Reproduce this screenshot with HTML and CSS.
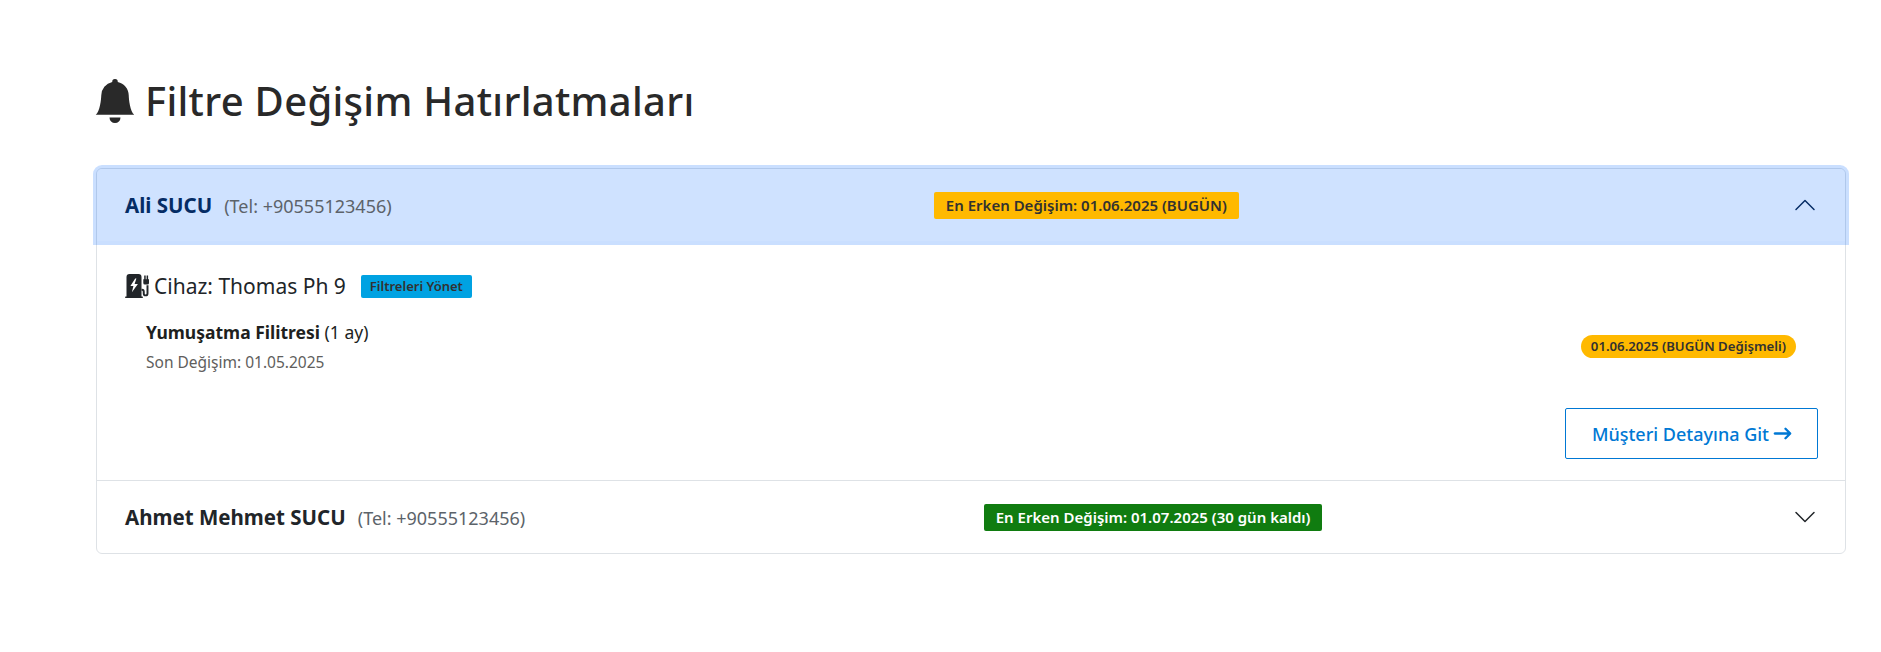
FILE: index.html
```html
<!DOCTYPE html>
<html lang="tr">
	<head>
		<meta charset="UTF-8">
		<title>Filtre Değişim Hatırlatmaları</title>
		<link rel="stylesheet" href="styles.css">
	</head>
	<body>
		<div class="page">
			<h1 class="title">
				<svg class="title-icon" viewBox="0 0 16 16"><path d="M8 16a2 2 0 0 0 2-2H6a2 2 0 0 0 2 2zm.995-14.901a1 1 0 1 0-1.99 0A5.002 5.002 0 0 0 3 6c0 1.098-.5 6-2 7h14c-1.5-1-2-5.902-2-7 0-2.42-1.72-4.44-4.005-4.901z"/></svg>
				Filtre Değişim Hatırlatmaları
			</h1>

			<div class="accordion">
				<div class="item">
					<div class="head head-open">
						<div class="who"><span class="name">Ali SUCU</span><span class="tel">(Tel: +90555123456)</span></div>
						<span class="badge badge-yellow">En Erken Değişim: 01.06.2025 (BUGÜN)</span>
						<div class="chev-box">
							<svg class="chev" viewBox="0 0 16 16"><path d="M1.646 11.354a.5.5 0 0 0 .708 0L8 5.707l5.646 5.647a.5.5 0 0 0 .708-.708l-6-6a.5.5 0 0 0-.708 0l-6 6a.5.5 0 0 0 0 .708z"/></svg>
						</div>
					</div>
					<div class="body">
						<div class="device">
							<svg class="device-icon" viewBox="0 0 16 16"><path fill-rule="evenodd" d="M1 2a2 2 0 0 1 2-2h6a2 2 0 0 1 2 2v13h.5a.5.5 0 0 1 0 1H.5a.5.5 0 0 1 0-1H1V2zm5.800 1L3.600 8h2l-1 4.200L8.600 6.600H6.400L7.600 3H6.800z"/><path d="M11 10.500h.4c.9 0 1.100.6 1.100 1.300v1.200a1.250 1.250 0 0 0 2.500 0V7.500" fill="none" stroke="currentColor" stroke-width="1.300"/><path d="M12.800 1h1v2.500h.6V1h1v2.500h.6v2.500a1 1 0 0 1-1 1h-1.800a1 1 0 0 1-1-1V3.500h.6z"/></svg>
							<span class="device-name">Cihaz: Thomas Ph 9</span>
							<span class="badge badge-blue">Filtreleri Yönet</span>
						</div>
						<div class="filter">
							<div>
								<div class="filter-name"><b>Yumuşatma Filitresi</b> (1 ay)</div>
								<div class="filter-last">Son Değişim: 01.05.2025</div>
							</div>
							<span class="pill">01.06.2025 (BUGÜN Değişmeli)</span>
						</div>
						<div class="actions">
							<a class="btn" href="#">Müşteri Detayına Git
								<svg class="arrow" viewBox="0 0 16 16"><path d="M1 8a.5.5 0 0 1 .5-.5h11.793l-3.147-3.146a.5.5 0 0 1 .708-.708l4 4a.5.5 0 0 1 0 .708l-4 4a.5.5 0 0 1-.708-.708L13.293 8.500H1.500A.5.5 0 0 1 1 8z"/></svg>
							</a>
						</div>
					</div>
				</div>
				<div class="item">
					<div class="head">
						<div class="who"><span class="name">Ahmet Mehmet SUCU</span><span class="tel">(Tel: +90555123456)</span></div>
						<span class="badge badge-green">En Erken Değişim: 01.07.2025 (30 gün kaldı)</span>
						<div class="chev-box">
							<svg class="chev" viewBox="0 0 16 16"><path d="M1.646 4.646a.5.5 0 0 1 .708 0L8 10.293l5.646-5.647a.5.5 0 0 1 .708.708l-6 6a.5.5 0 0 1-.708 0l-6-6a.5.5 0 0 1 0-.708z"/></svg>
						</div>
					</div>
				</div>
			</div>
		</div>
	</body>
</html>
```

FILE: styles.css
```css
body {
	margin: 0;
	padding: 0;
	background: #fff;
	color: #212529;
	font-family: "Noto Sans", "Open Sans", sans-serif;
	font-size: 16px;
	line-height: 24px;
}

.page {
	padding: 71px 35px 0 96px;
}

.title {
	display: flex;
	align-items: center;
	gap: 8px;
	margin: 0 0 37px -3px;
	font-size: 40px;
	font-weight: 500;
	line-height: 60px;
	letter-spacing: 0.3px;
	color: #292929;
}

.title-icon {
	width: 44px;
	height: 44px;
	fill: currentColor;
}

.accordion {
	border: 1px solid #dee2e6;
	border-radius: 6px;
	background: #fff;
}

.item + .item {
	border-top: 1px solid #dee2e6;
}

.head {
	display: flex;
	align-items: center;
	justify-content: space-between;
	height: 72px;
	padding: 0 28px;
}

.head-open {
	position: relative;
	z-index: 1;
	border-radius: 5px 5px 0 0;
	background: #cfe2ff;
	color: #052c65;
	box-shadow: 0 0 0 4px rgba(13, 110, 253, 0.22);
}

.who {
	display: flex;
	align-items: baseline;
	gap: 12px;
}

.name {
	font-size: 20.500px;
	font-weight: 700;
}

.tel {
	font-size: 18px;
	color: #5c636a;
}

.badge {
	border-radius: 2px;
	padding: 0 12px;
	font-size: 15px;
	font-weight: 600;
	line-height: 27px;
}

.badge-yellow {
	background: #ffb900;
	color: #323130;
}

.badge-green {
	background: #107c10;
	color: #fff;
}

.badge-blue {
	margin-left: 15px;
	padding: 0 9px;
	background: #00a2e2;
	color: #323130;
	font-size: 13px;
	line-height: 23px;
}

.chev-box {
	display: flex;
	justify-content: flex-end;
	width: 36px;
}

.chev {
	width: 24px;
	height: 24px;
	fill: currentColor;
}

.body {
	padding: 29px 27px 21px 28px;
}

.device {
	display: flex;
	align-items: center;
	height: 32px;
	font-size: 21px;
}

.device-icon {
	width: 24px;
	height: 24px;
	margin-right: 5px;
	fill: currentColor;
	color: #212529;
}

.filter {
	display: flex;
	align-items: center;
	justify-content: space-between;
	margin-top: 16px;
	padding: 0 22px 0 21px;
}

.filter-name {
	font-size: 17.500px;
	line-height: 28px;
	color: #201f1e;
}

.filter-last {
	margin-top: 4px;
	font-size: 15.500px;
	line-height: 24px;
	color: #605e5c;
}

.pill {
	border-radius: 12px;
	padding: 0 10px;
	background: #ffb900;
	color: #323130;
	font-size: 13.200px;
	font-weight: 600;
	line-height: 23px;
}

.actions {
	display: flex;
	justify-content: flex-end;
	margin-top: 34px;
}

.btn {
	display: flex;
	align-items: center;
	gap: 4px;
	height: 49px;
	padding: 0 25px 0 26px;
	border: 1px solid #0078d4;
	border-radius: 2px;
	color: #0078d4;
	font-size: 18px;
	font-weight: 500;
	text-decoration: none;
}

.arrow {
	width: 19px;
	height: 19px;
	fill: currentColor;
	stroke: currentColor;
	stroke-width: 0.9;
}
```
